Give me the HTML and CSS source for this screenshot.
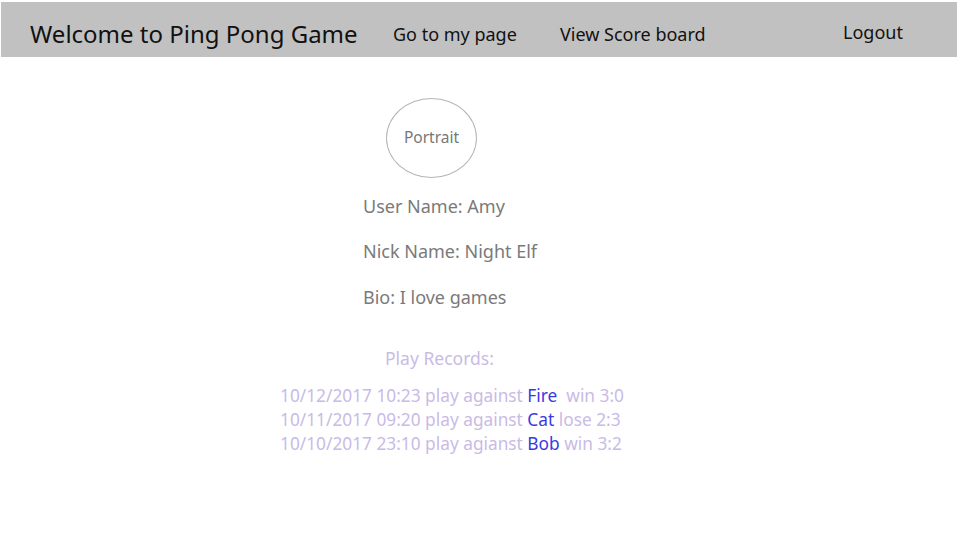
FILE: index.html
```html
<!DOCTYPE html>
<html>
<head>
<meta charset="utf-8">
<link rel="stylesheet" href="styles.css">
</head>
<body>
<header class="topbar">
  <h1 class="title">Welcome to Ping Pong Game</h1>
  <nav class="nav">
    <a class="nav-link mypage">Go to my page</a>
    <a class="nav-link score">View Score board</a>
    <a class="nav-link logout">Logout</a>
  </nav>
</header>
<main class="profile">
  <div class="portrait">Portrait</div>
  <p class="info">User Name: Amy</p>
  <p class="info">Nick Name: Night Elf</p>
  <p class="info">Bio: I love games</p>
  <section class="records">
    <h2 class="records-title">Play Records:</h2>
    <ul class="record-list">
      <li>10/12/2017 10:23 play against <span class="opp">Fire</span>&nbsp; win 3:0</li>
      <li>10/11/2017 09:20 play against&nbsp;<span class="opp">Cat</span> lose 2:3</li>
      <li>10/10/2017 23:10 play agianst <span class="opp">Bob</span> win 3:2</li>
    </ul>
  </section>
</main>
</body>
</html>
```
FILE: styles.css
```css
* { box-sizing: border-box; }
body {
  margin: 2px 3px 0 1px;
  font-family: "Noto Sans", "Open Sans", sans-serif;
  background: #fff;
}
.topbar {
  height: 55px;
  background: #c1c1c1;
  display: flex;
  align-items: center;
  padding-left: 29px;
  padding-top: 8px;
}
.title {
  margin: 0;
  font-size: 24px;
  font-weight: normal;
  color: #111;
  width: 363px;
}
.nav { display: flex; align-items: center; }
.nav-link {
  font-size: 18px;
  color: #111;
  text-decoration: none;
}
.mypage { width: 167px; }
.score { width: 283px; }
.logout { position: relative; top: -2px; }
.profile {
  padding-left: 362px;
  padding-top: 41px;
}
.portrait {
  width: 91px;
  height: 80px;
  border: 1px solid #b5b5b5;
  border-radius: 50%;
  margin-left: 23px;
  display: flex;
  align-items: center;
  justify-content: center;
  font-size: 15.5px;
  color: #777;
  padding-bottom: 2px;
}
.info {
  margin: 0;
  font-size: 18px;
  color: #7a7a7a;
  line-height: 24px;
  margin-top: 22px;
}
.info:first-of-type { margin-top: 16px; }
.info:nth-of-type(2) { margin-top: 21px; }
.records { margin-left: -83px; margin-top: 37px; }
.records-title {
  margin: 0 0 14px 105px;
  font-size: 17.5px;
  font-weight: normal;
  color: #c9bbe6;
  line-height: 24px;
}
.record-list {
  list-style: none;
  margin: 0;
  padding: 0;
  font-size: 17.3px;
  line-height: 24px;
  color: #c9bbe6;
}
.opp { color: #3a3adf; }
```
